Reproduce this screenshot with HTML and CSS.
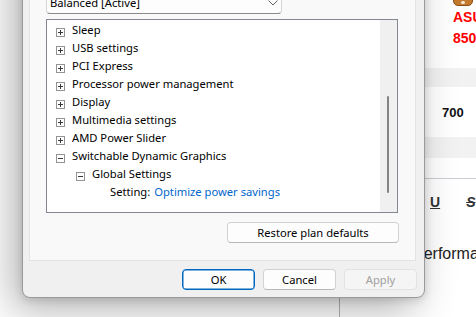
FILE: index.html
```html
<!DOCTYPE html>
<html lang="en">
<head>
<meta charset="utf-8">
<title>Power Options - Advanced settings</title>
<link rel="stylesheet" href="styles.css">
</head>
<body>
<div class="page">
  <div class="band product">
    <span class="badge"><span class="badge-dot"></span></span>
    <span class="red-line">ASUS</span>
    <span class="red-line">850</span>
  </div>
  <div class="band stripe s19"></div>
  <div class="band value">700</div>
  <div class="band stripe s21"></div>
  <div class="band ruled"></div>
  <div class="toolbar"><span class="tb-u">U</span><span class="tb-s">S</span></div>
  <p class="para">Performance</p>
  <div class="lower"></div>
</div>

<div class="dialog">
  <div class="panel">
    <p class="hint">Select the power plan that you want to customize, and then choose settings.</p>
    <div class="combo">
      <span class="combo-text">Balanced [Active]</span>
      <svg class="chev" width="10" height="6" viewBox="0 0 10 6"><path d="M0.5 0.5l4.5 4.5 4.5-4.5" fill="none" stroke="#606060" stroke-width="1"/></svg>
    </div>
    <div class="list">
      <ul class="tree">
        <li class="row"><svg class="exp" width="9" height="9" viewBox="0 0 9 9"><rect x="0.5" y="0.5" width="8" height="8" fill="#fff" stroke="#939393"/><path d="M2 4.5h5M4.5 2v5" stroke="#3a3a3a"/></svg><span>Sleep</span></li>
        <li class="row"><svg class="exp" width="9" height="9" viewBox="0 0 9 9"><rect x="0.5" y="0.5" width="8" height="8" fill="#fff" stroke="#939393"/><path d="M2 4.5h5M4.5 2v5" stroke="#3a3a3a"/></svg><span>USB settings</span></li>
        <li class="row"><svg class="exp" width="9" height="9" viewBox="0 0 9 9"><rect x="0.5" y="0.5" width="8" height="8" fill="#fff" stroke="#939393"/><path d="M2 4.5h5M4.5 2v5" stroke="#3a3a3a"/></svg><span>PCI Express</span></li>
        <li class="row"><svg class="exp" width="9" height="9" viewBox="0 0 9 9"><rect x="0.5" y="0.5" width="8" height="8" fill="#fff" stroke="#939393"/><path d="M2 4.5h5M4.5 2v5" stroke="#3a3a3a"/></svg><span>Processor power management</span></li>
        <li class="row"><svg class="exp" width="9" height="9" viewBox="0 0 9 9"><rect x="0.5" y="0.5" width="8" height="8" fill="#fff" stroke="#939393"/><path d="M2 4.5h5M4.5 2v5" stroke="#3a3a3a"/></svg><span>Display</span></li>
        <li class="row"><svg class="exp" width="9" height="9" viewBox="0 0 9 9"><rect x="0.5" y="0.5" width="8" height="8" fill="#fff" stroke="#939393"/><path d="M2 4.5h5M4.5 2v5" stroke="#3a3a3a"/></svg><span>Multimedia settings</span></li>
        <li class="row"><svg class="exp" width="9" height="9" viewBox="0 0 9 9"><rect x="0.5" y="0.5" width="8" height="8" fill="#fff" stroke="#939393"/><path d="M2 4.5h5M4.5 2v5" stroke="#3a3a3a"/></svg><span>AMD Power Slider</span></li>
        <li class="row"><svg class="exp" width="9" height="9" viewBox="0 0 9 9"><rect x="0.5" y="0.5" width="8" height="8" fill="#fff" stroke="#939393"/><path d="M2 4.5h5" stroke="#3a3a3a"/></svg><span>Switchable Dynamic Graphics</span></li>
        <li class="row l2"><svg class="exp" width="9" height="9" viewBox="0 0 9 9"><rect x="0.5" y="0.5" width="8" height="8" fill="#fff" stroke="#939393"/><path d="M2 4.5h5" stroke="#3a3a3a"/></svg><span>Global Settings</span></li>
        <li class="row l3"><span>Setting:</span><span class="link">Optimize power savings</span></li>
      </ul>
      <div class="vscroll"><div class="thumb"></div></div>
    </div>
    <div class="restore-row"><button class="btn restore" type="button">Restore plan defaults</button></div>
  </div>
  <div class="actions">
    <button class="btn ok" type="button">OK</button>
    <button class="btn" type="button">Cancel</button>
    <button class="btn" type="button" disabled>Apply</button>
  </div>
</div>
</body>
</html>
```

FILE: styles.css
```css
* { box-sizing: border-box; }

html, body {
  margin: 0;
  width: 476px;
  height: 317px;
  overflow: hidden;
}

body {
  position: relative;
  background: #ffffff;
  font-family: "Noto Sans", sans-serif;
}

/* ---------- background web page ---------- */
.page {
  font-family: "Liberation Sans", Arial, sans-serif;
  white-space: nowrap;
}

.band {
  display: flex;
  margin-left: 320px;
}

.product {
  height: 68px;
  flex-direction: column;
  align-items: flex-start;
  padding-left: 133px;
}

.badge {
  width: 20px;
  height: 12px;
  margin-top: -6px;
  border-radius: 5px;
  background: #c47a2c;
  border: 1px solid #8b5216;
  display: flex;
  justify-content: center;
  align-items: flex-end;
}

.badge-dot {
  width: 4px;
  height: 3px;
  margin-bottom: 1px;
  border-radius: 2px;
  background: #f4e6d2;
}

.red-line {
  display: block;
  color: #ff0000;
  font-weight: bold;
  font-size: 14px;
  line-height: 20px;
  margin-top: 1px;
}

.stripe { background: #f2f2f2; }
.s19 { height: 19px; }
.s21 { height: 21px; }

.value {
  height: 50px;
  align-items: center;
  padding-left: 122px;
  font-weight: bold;
  font-size: 13px;
  color: #111;
}

.ruled {
  height: 21px;
  border-bottom: 1px solid #c9ced4;
}

.toolbar {
  display: flex;
  gap: 26px;
  padding: 13px 0 0 430px;
  height: 46px;
  font-size: 14px;
  font-weight: bold;
  line-height: 20px;
  color: #333;
}

.tb-u { text-decoration: underline; }
.tb-s { text-decoration: line-through; font-style: italic; }

.para {
  margin: 17px 0 0 0;
  padding-left: 413px;
  font-size: 16px;
  line-height: 24px;
  color: #222;
}

.lower {
  height: 60px;
  margin-left: 339px;
  border-left: 1px solid #b4b4b4;
}

/* ---------- dialog window ---------- */
.dialog {
  position: absolute;
  left: 22px;
  bottom: 19px;
  width: 403px;
  background: #f0f0f0;
  border: 1px solid #9a9a9a;
  border-radius: 0 0 8px 8px;
  padding: 0 7px 7px 6px;
  box-shadow: -10px 12px 40px rgba(0, 0, 0, 0.3), 0 2px 8px rgba(0, 0, 0, 0.15);
  color: #000;
  font-size: 11.2px;
}

.panel {
  margin-right: 1px;
  background: #f9f9f9;
  border: 1px solid #e3e3e3;
  border-top: none;
  padding: 12px 17px 17px 16px;
  display: flex;
  flex-direction: column;
}

.hint {
  margin: 0 0 10px 0;
  line-height: 16px;
}

.combo {
  width: 236px;
  height: 23px;
  background: #fdfdfd;
  border: 1px solid #d4d4d4;
  border-bottom-color: #8a8a8a;
  border-radius: 4px;
  display: flex;
  align-items: center;
  justify-content: space-between;
  padding: 0 3px 0 3px;
  margin-bottom: 5px;
}

.combo-text { line-height: 18px; }

.list {
  height: 194px;
  background: #ffffff;
  border: 1px solid #828790;
  display: flex;
}

.tree {
  list-style: none;
  margin: 0;
  padding: 1px 0 0 9px;
  flex: 1;
}

.row {
  display: flex;
  align-items: flex-start;
  height: 18px;
  line-height: 18px;
  white-space: nowrap;
}

.exp {
  flex: none;
  margin: 7px 7px 0 0;
}

.l2 { padding-left: 20px; }
.l3 { padding-left: 54px; gap: 4px; }

.link { color: #0066cc; }

.vscroll {
  width: 17px;
  background: #f0f0f0;
  padding-left: 7px;
}

.thumb {
  width: 2px;
  height: 97px;
  margin-top: 76px;
  border-radius: 1px;
  background: #858585;
}

.restore-row {
  display: flex;
  justify-content: flex-end;
  margin-top: 9px;
}

.btn {
  font-family: "Noto Sans", sans-serif;
  font-size: 11.2px;
  color: #000;
  height: 21px;
  width: 73px;
  padding: 0;
  background: #fdfdfd;
  border: 1px solid #d2d2d2;
  border-bottom-color: #b8b8b8;
  border-radius: 4px;
  line-height: 18px;
}

.restore { width: 172px; margin-right: -1px; }

.ok {
  border: 1px solid #0067c0;
  box-shadow: inset 0 0 0 0.5px #0067c0;
}

.btn:disabled {
  background: #f5f5f5;
  border-color: #e2e2e2;
  color: #a0a0a0;
}

.actions {
  display: flex;
  justify-content: flex-end;
  gap: 8px;
  margin-top: 8px;
}
```
